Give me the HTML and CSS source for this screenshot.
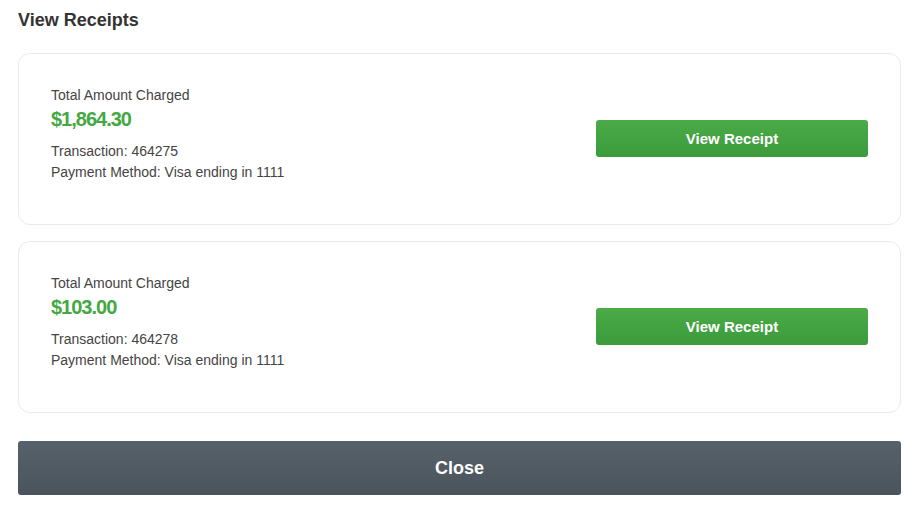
FILE: index.html
```html
<!DOCTYPE html>
<html lang="en">
<head>
  <meta charset="UTF-8">
  <meta name="viewport" content="width=device-width, initial-scale=1.0">
  <title>View Receipts</title>
  <link rel="stylesheet" href="styles.css">
</head>
<body>
  <div id="receipts">
    <h2 class="title">View Receipts</h2>
    <ul class="list">
      <li class="card">
        <div class="info">
          <p class="label">Total Amount Charged</p>
          <p class="amount">$1,864.30</p>
          <p class="line first">Transaction: 464275</p>
          <p class="line">Payment Method: Visa ending in 1111</p>
        </div>
        <button class="btn view">View Receipt</button>
      </li>
      <li class="card">
        <div class="info">
          <p class="label">Total Amount Charged</p>
          <p class="amount">$103.00</p>
          <p class="line first">Transaction: 464278</p>
          <p class="line">Payment Method: Visa ending in 1111</p>
        </div>
        <button class="btn view">View Receipt</button>
      </li>
    </ul>
    <button class="btn close">Close</button>
  </div>
</body>
</html>
```

FILE: styles.css
```css
html,body,ul,p,h2{
  margin: 0;
  padding: 0;
}
ul{
  list-style-type: none;
}
body{
  background-color: #fff;
  font-family: "Liberation Sans", Arial, sans-serif;
  color: #444;
}
#receipts{
  padding: 8px 12px 18px 18px;
}
.title{
  font-size: 18px;
  line-height: 24px;
  font-weight: bold;
  color: #333;
  margin-bottom: 21px;
}
.list{
  display: flex;
  flex-direction: column;
  gap: 16px;
}
.card{
  display: flex;
  align-items: center;
  justify-content: space-between;
  padding: 31px 32px 32px;
  border: 1px solid #ebebeb;
  border-radius: 12px;
}
.info{
  padding: 1px 0 9px;
}
.label{
  font-size: 14px;
  line-height: 18px;
  color: #444;
}
.amount{
  margin-top: 3px;
  font-size: 20px;
  line-height: 24px;
  font-weight: bold;
  letter-spacing: -1px;
  color: #45a843;
}
.line{
  font-size: 14px;
  line-height: 21px;
  color: #444;
}
.line.first{
  margin-top: 10px;
}
.btn{
  border: none;
  border-radius: 3px;
  color: #fff;
  font-family: "Liberation Sans", Arial, sans-serif;
  font-weight: bold;
  cursor: pointer;
}
.view{
  width: 272px;
  height: 37px;
  font-size: 15px;
  background: linear-gradient(#4aab48, #3c9a3a);
}
.close{
  display: block;
  width: 100%;
  height: 54px;
  margin-top: 28px;
  font-size: 18px;
  background: linear-gradient(#56616a, #4a545c);
}
```
